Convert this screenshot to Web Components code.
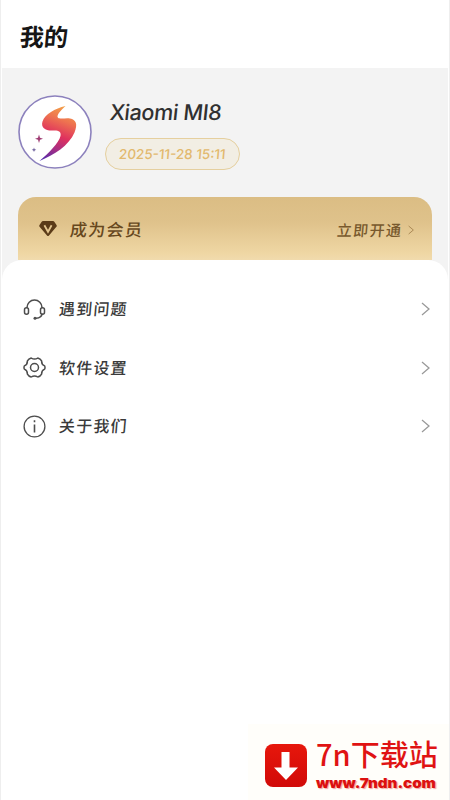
<!DOCTYPE html>
<html lang="zh">
<head>
<meta charset="utf-8">
<title>我的</title>
<style>
html,body{margin:0;height:100%;background:#fff}
body{font-family:Inter,"Noto Sans CJK SC",sans-serif;color:#222;overflow:hidden}
</style>
</head>
<body>
<mine-page></mine-page>
<script>
const define=(name,html)=>{
  const t=document.createElement('template');t.innerHTML=html;
  customElements.define(name,class extends HTMLElement{
    constructor(){super();this.attachShadow({mode:'open'}).append(t.content.cloneNode(true));}
  });
};

define('slant-text',`<style>
:host{display:block;white-space:nowrap;line-height:1;transform:skewX(-5deg)}
</style><slot></slot>`);

define('chevron-icon',`<style>
:host{display:block;width:9px;height:14px}
svg{display:block;width:100%;height:100%}
</style><svg viewBox="0 0 9 14" fill="none" stroke="currentColor" stroke-width="1.25"><path d="M1 1l7 6-7 6"/></svg>`);

define('user-avatar',`<style>
:host{display:block;width:74px;height:74px}
svg{display:block}
</style><svg width="74" height="74" viewBox="0 0 74 74">
<defs><linearGradient id="g" x1="46" y1="10" x2="25" y2="66" gradientUnits="userSpaceOnUse">
<stop offset="0" stop-color="#f3a447"/><stop offset=".25" stop-color="#ee7350"/><stop offset=".52" stop-color="#df315e"/><stop offset=".74" stop-color="#a72f83"/><stop offset="1" stop-color="#4c2bb0"/></linearGradient></defs>
<circle cx="37" cy="37" r="36" fill="#fff" stroke="#8c81bd" stroke-width="1.6"/>
<path fill="url(#g)" d="M47.500 11C37 13.500 27 19 24.500 26.500c-2 6.500 3.500 9.500 10.500 9 5.500-.4 8.500 1.200 7.500 5.500C41 48 30 58.500 21.500 66 36 60 51 50.500 56.500 37.500c3.500-8.500 1.500-13-4.500-14-4.500-.7-10 1-12-.7-2-2.200 2.500-7.300 7.500-11.800z"/>
<path fill="#9f3c73" d="M21 39.500l1 3.200 3 1-3 1-1 3.300-1-3.300-3-1 3-1z"/>
<path fill="#685998" d="M16 52.500l.6 1.700 1.700.6-1.700.6-.6 1.700-.6-1.700-1.700-.6 1.700-.6z"/>
</svg>`);

define('user-header',`<style>
:host{display:flex;box-sizing:border-box;height:129px;padding:27px 16px 0;gap:13px}
.info{display:flex;flex-direction:column;align-items:flex-start;padding-top:5px}
.name{font:500 21.500px/24px Inter,sans-serif;letter-spacing:-.35px;color:#303030;margin-left:5px;transform:skewX(-6deg)}
.date{display:flex;align-items:center;justify-content:center;box-sizing:border-box;width:135px;height:32px;margin-top:14px;border:1.5px solid #e5cf9e;border-radius:16px;background:#f2eee4;color:#e2b96e}
.date slant-text{font:500 13.500px/16px Inter,sans-serif;letter-spacing:0}
</style><user-avatar></user-avatar><div class="info"><slant-text class="name"><slot name="name"></slot></slant-text><div class="date"><slant-text><slot name="date"></slot></slant-text></div></div>`);

define('member-card',`<style>
:host{display:flex;align-items:center;box-sizing:border-box;height:63px;margin:0 16px;padding:3px 18px 0 21px;border-radius:18px 18px 0 0;background:linear-gradient(#dbbd84 0%,#dfc28b 40%,#efd7a4 90%,#f1dbae 100%);color:#67481e}
svg{display:block;width:18px;height:17px;margin-top:-3px}
.label{font-size:17px;letter-spacing:1.300px;font-weight:500;margin-left:13px;flex:1}
.go{font-size:15px;letter-spacing:1.350px;color:#78592d;font-weight:500}
chevron-icon{width:6px;height:10px;margin-left:6px;color:#a07d49}
</style><svg viewBox="0 0 18 17"><path fill="#5b3b18" d="M4 1h10q.8 0 1.300.7l2.200 3.400q.6.900-.1 1.700L10 15.500q-1 1.100-2 0L.6 6.800q-.7-.8-.1-1.700l2.200-3.400Q3.200 1 4 1z"/><path d="M5.400 5.300l3.600 6.500 3.600-6.500" fill="none" stroke="#e4c68f" stroke-width="1.800"/></svg>
<slant-text class="label"><slot></slot></slant-text><slant-text class="go"><slot name="action"></slot></slant-text><chevron-icon></chevron-icon>`);

define('menu-row',`<style>
:host{display:flex;align-items:center;box-sizing:border-box;height:58.500px;padding:0 18px 0 21px;color:#494949}
.label{flex:1;margin-left:13px;font-size:16px;letter-spacing:1.200px;font-weight:500;color:#3a3a3a}
chevron-icon{color:#999}
::slotted(svg){display:block;width:23px;height:23px;fill:none;stroke:#4d4d4d;stroke-width:1.500}
</style><slot name="icon"></slot><slant-text class="label"><slot></slot></slant-text><chevron-icon></chevron-icon>`);

define('site-mark',`<style>
:host{position:absolute;right:0;bottom:0;box-sizing:border-box;width:201px;height:76px;padding:16px 0 0 17px;display:flex;gap:9px;background:#fffefa;color:#dc1010}
svg{display:block;flex:none;margin-top:4px}
.cn{font:500 29px/34px "Noto Sans CJK SC",sans-serif;white-space:nowrap;margin-top:-4px;color:#e01313}
.url{font:900 13.500px/16px Inter,sans-serif;white-space:nowrap;margin-top:5px;width:max-content;text-shadow:1px 1px 1px #f3a4a0;transform:scaleX(1.12);transform-origin:left}
</style><svg width="42" height="43" viewBox="0 0 42 43"><defs><linearGradient id="r" x2="0" y2="1"><stop stop-color="#e7170c"/><stop offset="1" stop-color="#d10a08"/></linearGradient></defs><rect width="42" height="43" rx="8" fill="url(#r)"/><path fill="#fff" d="M16.500 8h8v15.500H33L21 36 9 23.500h7.500z"/></svg>
<div><div class="cn"><slot name="title"></slot></div><div class="url"><slot name="url"></slot></div></div>`);

define('mine-page',`<style>
:host{display:flex;flex-direction:column;position:relative;box-sizing:border-box;width:450px;height:800px;border:solid #eee;border-width:0 1px 0 1px;background:#fff;padding:0 1px}
header{box-sizing:border-box;height:68px;padding:26px 18px 0}
header slant-text{font-size:24px;font-weight:700;color:#161616}
.profile{height:192px;background:#f3f3f3}
main{flex:1;background:#fff;position:relative;padding-top:20px;box-sizing:border-box}
main::after{content:"";position:absolute;left:0;right:0;top:0;height:24px;background:#fff;border-radius:20px 20px 0 0}
main::before{content:"";position:absolute;left:0;right:0;top:0;height:22px;background:#f3f3f3}
menu-row{position:relative;z-index:1}
</style>
<header><slant-text>我的</slant-text></header>
<section class="profile"><user-header><span slot="name">Xiaomi MI8</span><span slot="date">2025-11-28 15:11</span></user-header>
<member-card>成为会员<span slot="action">立即开通</span></member-card></section>
<main>
<menu-row><svg slot="icon" viewBox="0 0 23 23"><path d="M4 10V9.500a7.500 7.500 0 0 1 15 0V10M19 15.500c0 3-2.500 4.500-6 4.800"/><rect x="1.500" y="9.800" width="4" height="6.500" rx="2"/><rect x="17.500" y="9.800" width="4" height="6.500" rx="2"/><circle cx="12" cy="20.300" r="1.500" fill="#4d4d4d" stroke="none"/></svg>遇到问题</menu-row>
<menu-row><svg slot="icon" viewBox="0 0 23 23"><path d="M8.200 2Q11.500 4.200 14.800 2q2.600.7 3.800 2.900-.1 3.800 3.100 5 .6 1.600 0 3.200-3.200 1.200-3.100 5-1.200 2.200-3.800 2.900-3.300-2.200-6.600 0-2.600-.7-3.800-2.900.1-3.800-3.100-5-.6-1.600 0-3.200 3.200-1.200 3.100-5Q5.600 2.700 8.200 2z" stroke-linejoin="round"/><circle cx="11.500" cy="11.500" r="4"/></svg>软件设置</menu-row>
<menu-row><svg slot="icon" viewBox="0 0 23 23"><circle cx="11.500" cy="11.500" r="10.400" stroke-width="1.300"/><path d="M11.500 9.500v8M11.500 5.300v2" stroke-width="1.600"/></svg>关于我们</menu-row>
</main>
<site-mark><span slot="title">7n下载站</span><span slot="url">www.7ndn.com</span></site-mark>`);
</script>
</body>
</html>
